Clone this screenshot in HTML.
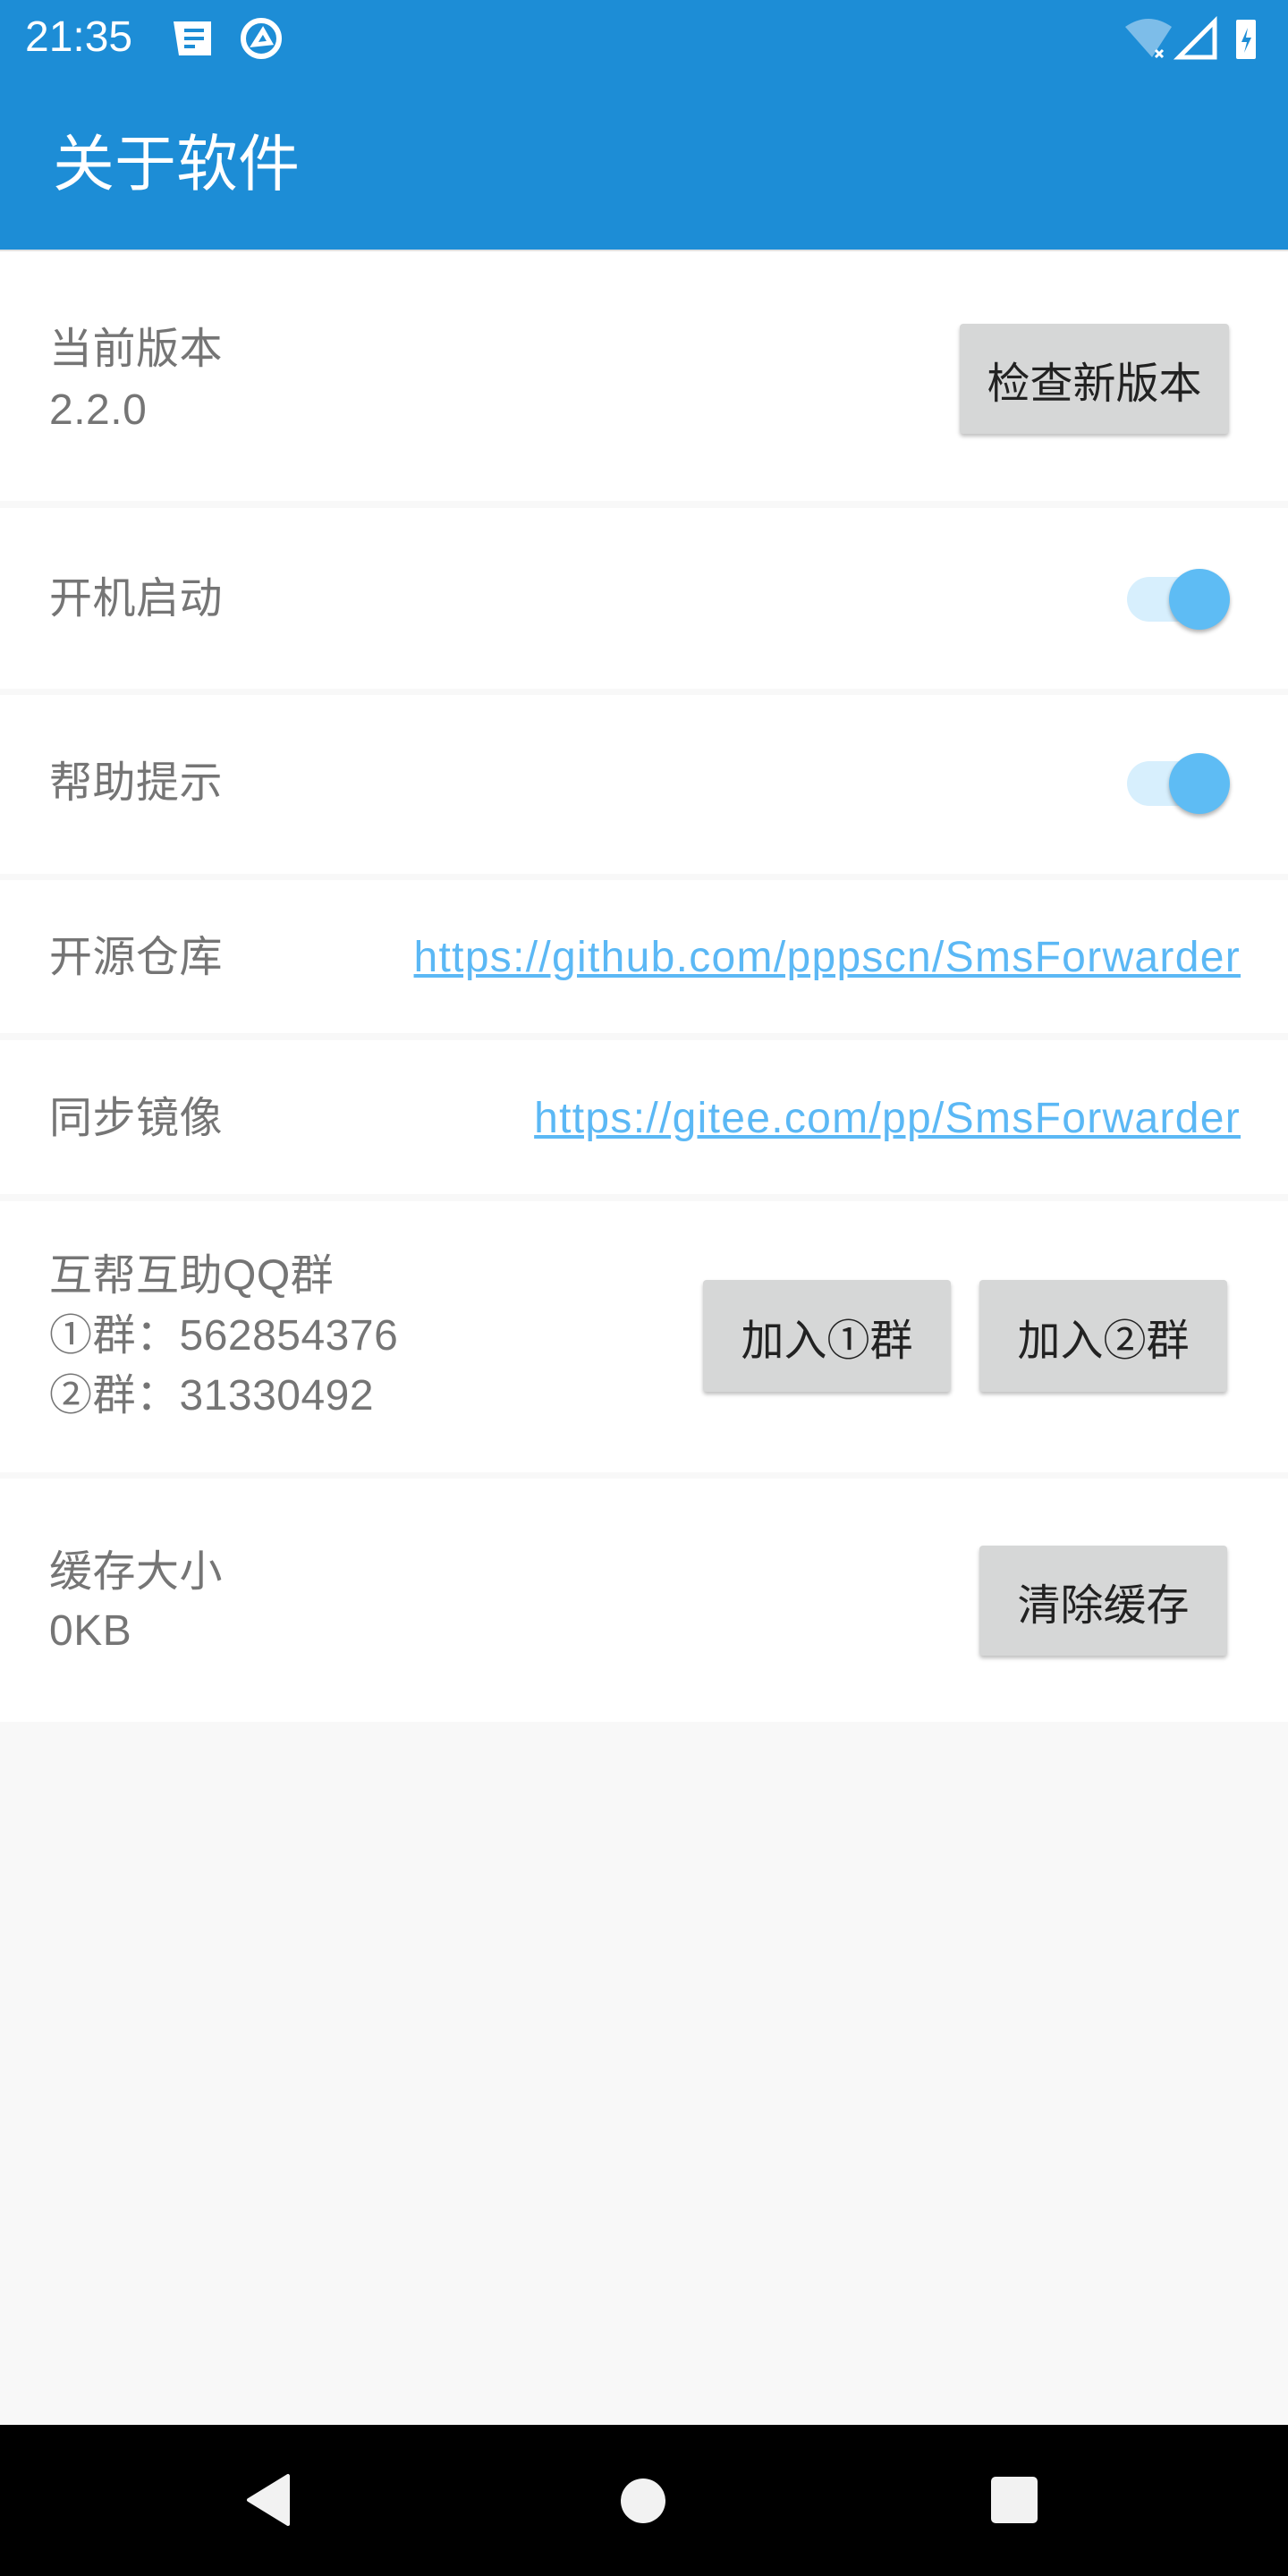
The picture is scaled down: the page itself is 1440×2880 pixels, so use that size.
<!DOCTYPE html>
<html><head><meta charset="utf-8"><style>
*{margin:0;padding:0;box-sizing:border-box}
body{width:1440px;height:2880px;background:#f8f8f8;position:relative;overflow:hidden;font-family:"Liberation Sans","Noto Sans CJK SC",sans-serif}
.a{position:absolute}
.bar{left:0;width:1440px;background:#1d8dd6}
.row{left:0;width:1440px;background:#fff}
.t{position:absolute;left:55px;color:#757575;font-size:48px;line-height:66px;white-space:nowrap;letter-spacing:0.5px}
.btn{position:absolute;background:#d6d7d7;color:#222;font-size:48px;display:flex;align-items:center;justify-content:center;border-radius:4px;box-shadow:0 3px 4px rgba(0,0,0,.25)}
.lnk{position:absolute;right:53px;color:#5bb8f5;font-size:48px;text-decoration:underline;line-height:66px;white-space:nowrap;letter-spacing:1.3px}
.trk{position:absolute;left:1260px;width:114px;height:50px;border-radius:25px;background:#d7effd}
.thm{position:absolute;left:1307px;width:68px;height:68px;border-radius:50%;background:#5ebcf4;box-shadow:0 3px 5px rgba(0,0,0,.3)}
</style></head><body>
<div class="a bar" style="top:0;height:279px"></div>
<div class="a" style="left:28px;top:12px;color:#fff;font-size:48px;line-height:60px">21:35</div>
<svg class="a" style="left:192px;top:22px" width="48" height="42" viewBox="0 0 48 42"><path d="M2 2h42v38H8z" fill="#fff"/><rect x="14" y="10" width="22" height="4" fill="#1d8dd6"/><rect x="14" y="19" width="22" height="4" fill="#1d8dd6"/><rect x="14" y="28" width="12" height="4" fill="#1d8dd6"/></svg>
<svg class="a" style="left:266px;top:18px" width="52" height="50" viewBox="0 0 52 50"><circle cx="26" cy="25" r="20" fill="none" stroke="#fff" stroke-width="6"/><path d="M18 32 L28 16 L36 30 Z" fill="none" stroke="#fff" stroke-width="5"/></svg>
<svg class="a" style="left:1256px;top:18px" width="160" height="50" viewBox="0 0 160 50"><path d="M2 12 Q28 -6 54 12 L32 46 Z" fill="#7dbde9"/><path d="M36 38l8 8M44 38l-8 8" stroke="#fff" stroke-width="3"/><path d="M62 46 L102 6 L102 46 Z" fill="none" stroke="#fff" stroke-width="5"/><rect x="126" y="4" width="22" height="44" rx="2" fill="#fff"/><path d="M139 13 l-7 16h6l-3 12 8-17h-6z" fill="#1d8dd6"/></svg>
<div class="a" style="left:59px;top:144px;color:#fff;font-size:69px;line-height:80px">关于软件</div>
<div class="a" style="left:0;top:279px;width:1440px;height:10px;background:linear-gradient(rgba(0,0,0,.1),rgba(0,0,0,0))"></div>

<div class="a row" style="top:281px;height:279px"><div class="t" style="top:77px">当前版本</div><div class="t" style="top:145px">2.2.0</div>
<div class="btn" style="left:1073px;top:81px;width:301px;height:123px">检查新版本</div></div>

<div class="a row" style="top:568px;height:202px"><div class="t" style="top:69px">开机启动</div><div class="trk" style="top:77px"></div><div class="thm" style="top:68px"></div></div>
<div class="a row" style="top:777px;height:200px"><div class="t" style="top:66px">帮助提示</div><div class="trk" style="top:74px"></div><div class="thm" style="top:65px"></div></div>
<div class="a row" style="top:984px;height:171px"><div class="t" style="top:54px">开源仓库</div><div class="lnk" style="top:54px">https://github.com/pppscn/SmsForwarder</div></div>
<div class="a row" style="top:1163px;height:172px"><div class="t" style="top:55px">同步镜像</div><div class="lnk" style="top:55px">https://gitee.com/pp/SmsForwarder</div></div>
<div class="a row" style="top:1343px;height:303px"><div class="t" style="top:51px">互帮互助QQ群</div><div class="t" style="top:118px">①群：562854376</div><div class="t" style="top:185px">②群：31330492</div>
<div class="btn" style="left:786px;top:88px;width:277px;height:125px">加入①群</div><div class="btn" style="left:1095px;top:88px;width:277px;height:125px">加入②群</div></div>
<div class="a row" style="top:1653px;height:272px"><div class="t" style="top:72px">缓存大小</div><div class="t" style="top:138px">0KB</div>
<div class="btn" style="left:1095px;top:75px;width:277px;height:123px">清除缓存</div></div>

<div class="a" style="left:0;top:2711px;width:1440px;height:169px;background:#000"></div>
<svg class="a" style="left:270px;top:2764px" width="60" height="62" viewBox="0 0 60 62"><path d="M52 4 L52 58 L8 31 Z" fill="#f2f2f2" stroke="#f2f2f2" stroke-width="4" stroke-linejoin="round"/></svg>
<div class="a" style="left:694px;top:2771px;width:50px;height:50px;border-radius:50%;background:#f2f2f2"></div>
<div class="a" style="left:1108px;top:2769px;width:52px;height:52px;border-radius:5px;background:#f2f2f2"></div>
</body></html>
